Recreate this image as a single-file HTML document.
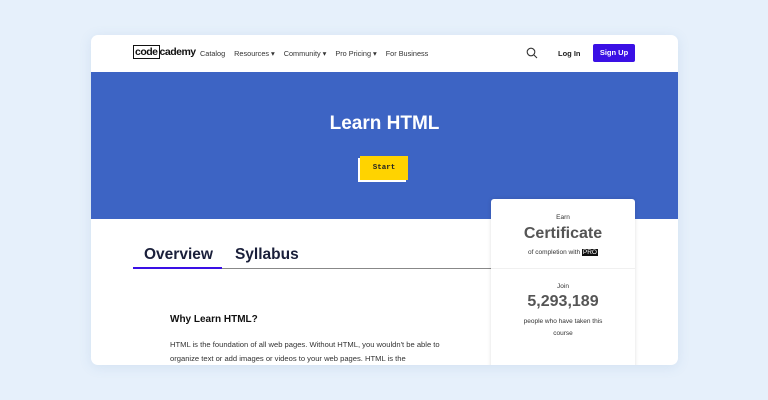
<!DOCTYPE html>
<html><head><style>
body{margin:0;width:768px;height:400px;background:#e6f0fb;font-family:"Liberation Sans",sans-serif;overflow:hidden;position:relative}
.card{position:absolute;left:91px;top:35px;width:587px;height:330px;background:#fff;border-radius:7px;overflow:hidden;box-shadow:0 2px 12px rgba(100,140,190,.15)}
.nav{position:absolute;left:0;top:0;width:100%;height:37px}
.logo{position:absolute;left:42px;top:11px;font-size:10.5px;font-weight:bold;color:#111;letter-spacing:-.5px}
.logo span{border:1.2px solid #111;padding:0 1px}
.links{position:absolute;left:109px;top:14px;font-size:7.3px;color:#333}
.links b{font-weight:normal;margin-right:9px}
.hero{position:absolute;left:0;top:37px;width:100%;height:147px;background:#3d64c4}
h1{position:absolute;left:0;width:587px;top:78px;margin:0;text-align:center;color:#fff;font-size:19px}
.start{position:absolute;left:269px;top:121px;width:48px;height:24px;background:#ffd300;box-shadow:-2px 2px 0 #fff;font-family:"Liberation Mono",monospace;font-size:7.5px;font-weight:bold;text-align:center;line-height:24px;color:#222}
.tabs{position:absolute;left:42px;top:211px;font-size:15.5px;font-weight:bold;color:#1a1f3a}
.line{position:absolute;left:42px;top:233px;width:360px;height:1px;background:#888}
.act{position:absolute;left:42px;top:232px;width:89px;height:2px;background:#3a10e5}
.side{position:absolute;left:400px;top:164px;width:144px;height:180px;background:#fff;border-radius:3px;box-shadow:0 0 4px rgba(0,0,0,.12);text-align:center;color:#333}
</style></head><body>
<div class="card">
<div class="nav">
<div class="logo"><span>code</span>cademy</div>
<div class="links"><b>Catalog</b><b>Resources ▾</b><b>Community ▾</b><b>Pro Pricing ▾</b><b>For Business</b></div>
<svg style="position:absolute;left:435px;top:12px" width="12" height="12" viewBox="0 0 12 12"><circle cx="5" cy="5" r="3.8" fill="none" stroke="#333" stroke-width="1.1"/><line x1="8" y1="8" x2="11" y2="11" stroke="#333" stroke-width="1.1"/></svg>
<div style="position:absolute;left:467px;top:14px;font-size:7.5px;font-weight:bold;color:#222">Log In</div>
<div style="position:absolute;left:502px;top:9px;width:42px;height:18px;background:#3a10e5;border-radius:2px;color:#fff;font-size:7.5px;font-weight:bold;text-align:center;line-height:18px">Sign Up</div>
</div>
<div class="hero"></div>
<h1>Learn HTML</h1>
<div class="start">Start</div>
<div class="tabs"><span style="margin-left:11px">Overview</span><span style="margin-left:22px">Syllabus</span></div>
<div class="line"></div><div class="act"></div>
<div style="position:absolute;left:79px;top:279px;font-size:10px;font-weight:bold;color:#111">Why Learn HTML?</div>
<div style="position:absolute;left:79px;top:303px;width:290px;font-size:7.6px;line-height:14px;color:#333">HTML is the foundation of all web pages. Without HTML, you wouldn't be able to organize text or add images or videos to your web pages. HTML is the</div>
<div class="side">
<div style="margin-top:15px;font-size:6.5px">Earn</div>
<div style="font-size:16px;font-weight:bold;color:#555;margin-top:4px">Certificate</div>
<div style="font-size:6.5px;margin-top:6px">of completion with <span style="background:#111;color:#fff;padding:0 1px">PRO</span></div>
<div style="border-top:1px solid #f0f0f0;margin-top:12px"></div>
<div style="margin-top:14px;font-size:6.5px">Join</div>
<div style="font-size:16px;font-weight:bold;color:#555;margin-top:3px">5,293,189</div>
<div style="font-size:6.5px;line-height:12px;margin:5px 30px 0">people who have taken this course</div>
</div>
</div>
</body></html>
